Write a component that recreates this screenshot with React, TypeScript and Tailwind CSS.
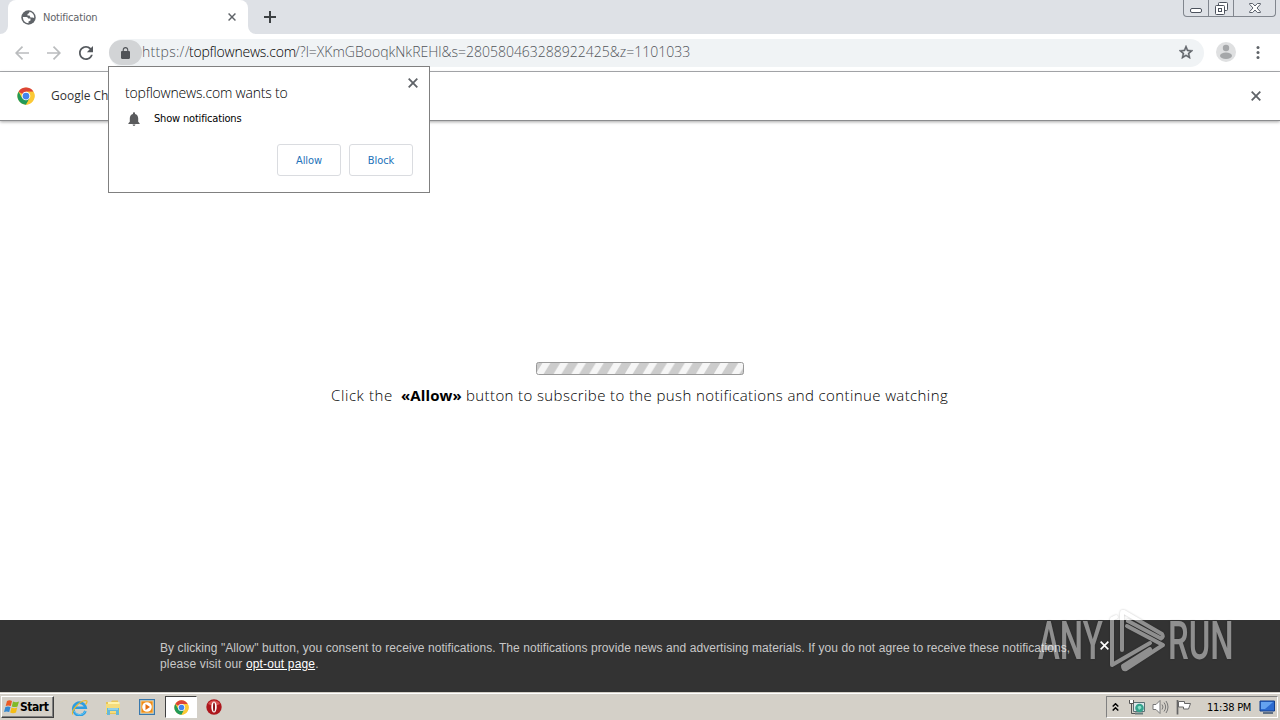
import React from "react";

const tahoma = "font-['DejaVu_Sans_Condensed','DejaVu_Sans',sans-serif] [font-stretch:condensed]";

function Cross({ className = "" }: { className?: string }) {
  return (
    <svg className={className} viewBox="0 0 10 10" fill="none" stroke="currentColor" strokeWidth="1.8">
      <path d="M0.7 0.7 9.3 9.3M9.3 0.7 0.7 9.3" />
    </svg>
  );
}

function ChromeLogo({ className = "" }: { className?: string }) {
  return (
    <svg className={className} viewBox="0 0 48 48">
      <circle cx="24" cy="24" r="23" fill="#fbc936" />
      <path d="M24 24 4.1 12.5A23 23 0 0 1 43.9 12.5H24z" fill="#dc4437" />
      <path d="M4.1 12.5A23 23 0 0 0 24 47L34 29.7 24 24 14 29.7z" fill="#229a58" />
      <path d="M24 12.5H43.9A23 23 0 0 1 24 47L34 29.7z" fill="#fbc936" />
      <circle cx="24" cy="24" r="11.5" fill="#fff" />
      <circle cx="24" cy="24" r="9" fill="#4285ed" />
    </svg>
  );
}

function TabStrip() {
  return (
    <div className="flex h-[34px] shrink-0 items-end bg-[#dee1e6]">
      <svg className="h-2 w-2 shrink-0" viewBox="0 0 8 8"><path d="M8 0V8H0A8 8 0 0 0 8 0z" fill="#fff" /></svg>
      <div className="flex h-[34px] w-60 shrink-0 items-center rounded-t-lg bg-white pl-[13px] pr-[11px] text-[#5f6368]">
        <svg className="h-[15px] w-[15px]" viewBox="0 0 15 15">
          <circle cx="7.500" cy="7.500" r="7.200" fill="#5f6368" />
          <path d="M1.800 7H5.500Q7 7 7.200 8.500H9.500V10.500L7.500 11.500V13.200Q2.300 13 1.800 7z" fill="#fff" />
          <path d="M8.300 1.800V3L6.500 4V5.500H8.500L9.500 7.500H11.500L13.200 8Q13.500 3 8.300 1.800z" fill="#fff" />
        </svg>
        <span className={`${tahoma} ml-[7px] pt-0.5 text-[11px] tracking-[-0.2px]`}>Notification</span>
        <Cross className="ml-auto mr-px h-2 w-2" />
      </div>
      <svg className="h-2 w-2 shrink-0" viewBox="0 0 8 8"><path d="M0 0V8H8A8 8 0 0 1 0 0z" fill="#fff" /></svg>
      <svg className="mb-[11px] ml-2 h-3 w-3" viewBox="0 0 12 12" stroke="#3c4043" strokeWidth="2"><path d="M6 0V12M0 6H12" /></svg>
      <div className="mb-[17px] ml-auto mr-1 flex h-[17px] w-[93px] rounded-b-[4px] border border-t-0 border-[#81868e]">
        <div className="flex w-[25px] justify-center border-r border-[#81868e] pt-2">
          <div className="h-[5px] w-3 rounded-[2px] border border-[#4c525d] bg-white" />
        </div>
        <div className="flex w-[25px] justify-center border-r border-[#81868e] pt-0.5">
          <svg className="h-[13px] w-[13px]" viewBox="0 0 13 13" fill="#fff" stroke="#4c525d">
            <rect x="3.500" y="0.500" width="9" height="8" rx="1" />
            <rect x="0.500" y="3.500" width="9" height="9" rx="1" />
            <rect x="3.500" y="6.500" width="3" height="3" />
          </svg>
        </div>
        <div className="flex flex-1 justify-center pt-[3px]">
          <svg className="h-[10px] w-3" viewBox="0 0 12 10" fill="#fff" stroke="#4c525d" strokeWidth="0.9">
            <path d="M.6.500H3.600L6 3 8.400.500H11.400V1.300L8 5 11.400 8.700V9.500H8.400L6 7 3.600 9.500H.6V8.700L4 5 .6 1.300z" />
          </svg>
        </div>
      </div>
    </div>
  );
}

function Toolbar() {
  return (
    <div className="flex h-[38px] shrink-0 items-center border-b border-[#acaeb1] bg-white pl-[15px] pr-5">
      <svg className="h-[14px] w-[14px]" viewBox="0 0 14 14" fill="none" stroke="#babcbe" strokeWidth="1.700"><path d="M14 7H1.300M7.500.700 1.200 7 7.500 13.300" /></svg>
      <svg className="ml-[18px] h-[14px] w-[14px]" viewBox="0 0 14 14" fill="none" stroke="#babcbe" strokeWidth="1.700"><path d="M0 7H12.700M6.500.700 12.800 7 6.500 13.300" /></svg>
      <svg className="ml-[18px] h-[14px] w-[14px]" viewBox="4 4 16 16" fill="#55595e"><path d="M17.650 6.350C16.200 4.900 14.210 4 12 4c-4.420 0-7.990 3.580-7.990 8s3.570 8 7.990 8c3.730 0 6.840-2.550 7.730-6h-2.080c-.820 2.330-3.040 4-5.650 4-3.310 0-6-2.690-6-6s2.690-6 6-6c1.660 0 3.140.690 4.220 1.780L13 11h7V4l-2.350 2.350z" /></svg>
      <div className="ml-4 flex h-7 w-[1095px] items-center rounded-full bg-[#f0f3f5] pr-[11px]">
        <div className="flex h-[25px] w-[33px] shrink-0 items-center justify-center rounded-full bg-[#d2d4d6]">
          <svg className="h-3 w-[9px]" viewBox="4 1 16 21" fill="#505357"><path d="M18 8h-1V6c0-2.760-2.240-5-5-5S7 3.240 7 6v2H6c-1.100 0-2 .900-2 2v10c0 1.100.900 2 2 2h12c1.100 0 2-.900 2-2V10c0-1.100-.900-2-2-2zM9 6c0-1.660 1.340-3 3-3s3 1.340 3 3v2H9V6z" /></svg>
        </div>
        <span className="-mt-0.5 flex whitespace-nowrap font-['Open_Sans','Noto_Sans',sans-serif] text-[14px] font-light leading-7 text-[#505459]">
          <span className="w-[47px] tracking-[0.3px]">https://</span>
          <span className="w-[107px] tracking-[-0.22px] text-black">topflownews.com</span>
          <span className="-ml-px tracking-[0px]">/?l=XKmGBooqkNkREHl&amp;s=280580463288922425&amp;z=1101033</span>
        </span>
        <svg className="mb-0.5 ml-auto h-[14px] w-[14px]" viewBox="2 2 20 19" fill="#5f6368"><path d="M22 9.240l-7.190-.620L12 2 9.190 8.630 2 9.240l5.460 4.730L5.820 21 12 17.270 18.180 21l-1.630-7.030L22 9.240zM12 15.400l-3.760 2.270 1-4.280-3.320-2.880 4.380-.380L12 6.100l1.710 4.040 4.380.380-3.320 2.880 1 4.280L12 15.400z" stroke="#5f6368" strokeWidth=".7" /></svg>
      </div>
      <svg className="mb-0.5 ml-3 h-5 w-5" viewBox="0 0 20 20"><circle cx="10" cy="10" r="10" fill="#dfe0e1" /><circle cx="10" cy="6" r="3.200" fill="#a5a7a9" /><ellipse cx="10" cy="13.700" rx="6" ry="3.200" fill="#a5a7a9" /></svg>
      <svg className="ml-auto h-[13px] w-[4px]" viewBox="0 0 4 13" fill="#5f6368"><circle cx="2" cy="1.500" r="1.500" /><circle cx="2" cy="6.500" r="1.500" /><circle cx="2" cy="11.500" r="1.500" /></svg>
    </div>
  );
}

function InfoBar() {
  return (
    <div className="flex h-[49px] shrink-0 items-center border-b border-[#8b8c8e] bg-white pl-[17px] pr-[19px] shadow-[0_1px_3px_rgba(0,0,0,0.35)]">
      <ChromeLogo className="h-[18px] w-[18px]" />
      <span className="ml-4 w-[57px] overflow-hidden whitespace-nowrap font-['Open_Sans',sans-serif] text-[12px] text-[#333]">Google Ch</span>
      <Cross className="ml-auto h-[10px] w-[10px] text-[#5f6368]" />
    </div>
  );
}

function PermissionPopup() {
  const button = `${tahoma} flex h-8 w-16 items-center justify-center rounded-[3px] border border-[#dadce0] pt-0.5 text-[11px] tracking-[-0.1px] text-[#2272b9]`;
  return (
    <div className="absolute left-[108px] top-[66px] flex h-[127px] w-[322px] flex-col border border-[#808080] bg-white px-4 text-black">
      <div className="-mr-[5px] flex h-[38px] items-end justify-between">
        <span className="whitespace-nowrap font-['Open_Sans','Noto_Sans',sans-serif] text-[14px] font-[350] leading-[25px] tracking-[-0.2px] text-black">topflownews.com wants to</span>
        <Cross className="mb-[17px] h-[10px] w-[10px] text-[#5f6368]" />
      </div>
      <div className="flex h-7 items-center pl-[3px]">
        <svg className="h-[14px] w-3" viewBox="4 2 16 20" fill="#5a5b5d"><path d="M12 22c1.100 0 2-.900 2-2h-4c0 1.100.890 2 2 2zm6-6v-5c0-3.070-1.640-5.640-4.500-6.320V4c0-.830-.670-1.500-1.500-1.500s-1.500.670-1.500 1.500v.680C7.630 5.360 6 7.920 6 11v5l-2 2v1h16v-1l-2-2z" /></svg>
        <span className={`${tahoma} ml-[14px] whitespace-nowrap pt-px text-[11px] tracking-[-0.18px]`}>Show notifications</span>
      </div>
      <div className="mt-[11px] flex justify-end gap-2">
        <button className={button}>Allow</button>
        <button className={button}>Block</button>
      </div>
    </div>
  );
}

function Watermark() {
  const word = "origin-top-left scale-x-[0.62] absolute top-0 font-['Roboto',sans-serif] text-[53px] font-medium leading-[62px]";
  return (
    <div className="pointer-events-none absolute left-[1038px] top-[610px] h-[62px] w-[196px] text-white opacity-45 drop-shadow-[0_0_1px_rgba(0,0,0,0.5)]">
      <span className={`${word} left-0`}>ANY</span>
      <svg className="absolute left-[72px] top-0 h-[62px] w-[56px]" viewBox="0 0 56 62" fill="none" stroke="currentColor" strokeWidth="4" strokeLinejoin="round" strokeLinecap="round">
        <path d="M6 7 2 9V55L40 33" />
        <path d="M12 40V3Q12 1 14 2L52 24Q54 27 51 28.500L18 11" />
        <path d="M17 16 53 35 16 59Q13 60 13 56L40 39" />
      </svg>
      <span className={`${word} left-[130px]`}>RUN</span>
    </div>
  );
}

function ConsentBar() {
  return (
    <div className="flex h-[72px] shrink-0 items-start bg-[#333] pl-40 pr-[171px] pt-5 font-['Liberation_Sans',Arial,sans-serif] text-[12px] leading-4 text-[#c8c8c8]">
      <div className="whitespace-nowrap">
        <div className="tracking-[0.077px]">By clicking "Allow" button, you consent to receive notifications. The notifications provide news and advertising materials. If you do not agree to receive these notifications,</div>
        <div className="tracking-[0.15px]">please visit our <a className="text-white underline">opt-out page</a>.</div>
      </div>
      <Cross className="ml-auto mt-[1px] h-[9px] w-[9px] text-white" />
    </div>
  );
}

function Taskbar() {
  return (
    <div className="flex h-7 shrink-0 items-center border-t border-[#d4d0c8] bg-[#d4d0c8] pt-px shadow-[inset_0_1px_0_#fff]">
      <div className="ml-px flex h-[22px] w-[53px] items-center border border-b-[#404040] border-l-white border-r-[#404040] border-t-white shadow-[inset_-1px_-1px_0_#808080]">
        <svg className="ml-0.5 h-4 w-4 shrink-0" viewBox="0 0 16 16">
          <path d="M3 2Q5.500.500 8 2L6.800 7Q4 5.800 1.700 7z" fill="#eb5a24" />
          <path d="M9 2.400Q12 4 15 2.400L13.500 7.400Q11 8.800 7.800 7.400z" fill="#80ba27" />
          <path d="M1.400 8Q4 6.800 6.500 8L5.200 13Q2.500 11.800 0 13z" fill="#3488d1" />
          <path d="M7.500 8.500Q10.500 10 13.200 8.500L12 13.500Q9 15 6.200 13.500z" fill="#f5bd16" />
        </svg>
        <span className={`${tahoma} text-[12px] font-bold tracking-[-0.45px] text-black`}>Start</span>
      </div>
      <svg className="ml-[17px] h-[17px] w-[17px]" viewBox="0 0 17 17" fill="none">
        <path d="M14.500 12A6.300 6.300 0 1 1 14.700 8.800H4" stroke="#2d9de1" strokeWidth="2.600" />
        <path d="M14.500 12A6.300 6.300 0 0 1 3 12" stroke="#66c7f4" strokeWidth="1" />
        <path d="M2 15.500C-1 13 8 2 14.500 1.500 17 1.500 16 4 14.500 5.500" stroke="#e9b82b" strokeWidth="1.200" />
      </svg>
      <svg className="ml-[17px] h-[17px] w-4" viewBox="0 0 16 17">
        <path d="M1 3H6L7 1.500H13V15H1z" fill="#e7c456" /><path d="M3 3H14.500V13H3z" fill="#fff3a9" /><path d="M1 5H15V14H1z" fill="#f5dc7b" />
        <path d="M2 9H14V16H11V12H5V16H2z" fill="#66b8d9" /><path d="M3 10H13" stroke="#bde9f5" />
      </svg>
      <svg className="ml-[18px] h-4 w-4" viewBox="0 0 16 16"><rect x=".5" y=".5" width="15" height="15" fill="#79b9e8" stroke="#3878ad" /><rect x="2" y="2" width="12" height="12" fill="#ef8c17" stroke="#f9c87e" /><circle cx="8" cy="8" r="4.800" fill="#fff" /><path d="M6.500 5 11 8 6.500 11z" fill="#e46d10" /></svg>
      <div className="ml-[10px] flex h-[22px] w-8 items-center justify-center border border-b-white border-l-[#404040] border-r-white border-t-[#404040] bg-white">
        <ChromeLogo className="h-[15px] w-[15px]" />
      </div>
      <svg className="ml-[9px] h-4 w-4" viewBox="0 0 16 16"><circle cx="8" cy="8" r="7.700" fill="#ad171d" /><path d="M2 5A7 7 0 0 1 14 5Q8 8 2 5" fill="#d95050" /><ellipse cx="8" cy="8" rx="2.700" ry="5.600" fill="#fff" /><ellipse cx="8" cy="8" rx="1" ry="4.600" fill="#8c1218" /></svg>
      <div className="ml-auto mr-0.5 flex h-[22px] w-[172px] items-center border border-b-white border-l-[#808080] border-r-white border-t-[#808080] pl-[5px]">
        <svg className="h-2 w-[7px]" viewBox="0 0 7 8" fill="none" stroke="#000" strokeWidth="1.500"><path d="M.7 3.500 3.500.800 6.300 3.500M.7 7.500 3.500 4.800 6.300 7.500" /></svg>
        <svg className="ml-[9px] h-4 w-[17px]" viewBox="0 0 17 16"><path d="M5.500 3.500H16.500V12.500H5.500z" fill="#dce8eb" stroke="#5b7075" /><path d="M7 14.500H15" stroke="#687c7e" strokeWidth="2" /><circle cx="11.500" cy="9" r="4.300" fill="#35a28d" /><path d="M9.500 8Q13 5 13.500 9L11 11z" fill="#8be0cb" /><path d="M1.500 1V4.500H5.500V1" fill="#fff" stroke="#555" /><path d="M3.500 4.500V14.500H7" fill="none" stroke="#555" /></svg>
        <svg className="ml-[7px] h-4 w-[17px]" viewBox="0 0 17 16" fill="none" stroke="#777"><path d="M1 5.500H4L8 1.500V14.500L4 10.500H1z" fill="#fff" /><path d="M10 5.500Q12 8 10 10.500M12 3.500Q15.300 8 12 12.500M14 2Q18 8 14 14" /></svg>
        <svg className="ml-[7px] h-4 w-4" viewBox="0 0 16 16" stroke="#666"><path d="M1.500 1V15.500" strokeWidth="1.700" /><path d="M2.500 2.500H8.500V4.500H14.500L12.500 10H7.500V8H2.500z" fill="#fff" /></svg>
        <span className={`${tahoma} ml-[15px] whitespace-nowrap pt-0.5 text-[11px] tracking-[-0.25px] text-black`}>11:38 PM</span>
        <svg className="ml-auto mr-px h-[14px] w-[17px]" viewBox="0 0 17 14"><path d="M1 1H15.500V11H1z" fill="#2c6bd0" stroke="#133e8a" /><path d="M2 2H14L6 9H2z" fill="#64a2ef" /><path d="M4 13H14" stroke="#38516f" strokeWidth="1.500" /></svg>
      </div>
    </div>
  );
}

export default function App() {
  return (
    <div className="relative flex h-[720px] w-[1280px] flex-col overflow-hidden bg-white">
      <TabStrip />
      <Toolbar />
      <InfoBar />
      <main className="flex flex-1 flex-col items-center pt-[241px]">
        <svg className="h-[13px] w-[208px]" viewBox="0 0 208 13">
          <defs>
            <pattern id="stripes" width="17.800" height="13" patternUnits="userSpaceOnUse"><rect width="17.800" height="13" fill="#ccc" /><path d="M-1 13 7 0H15L7 13z" fill="#f6f6f6" /></pattern>
          </defs>
          <rect x=".5" y=".5" width="207" height="12" rx="2" fill="url(#stripes)" stroke="#999" />
        </svg>
        <p className="mt-[9px] flex w-[618px] whitespace-pre font-['Open_Sans',sans-serif] text-[15px] font-[350] leading-[22px] text-black">
          <span className="w-[70px] shrink-0 tracking-[0.6px]">Click the </span>
          <b className="w-[65px] shrink-0 font-bold tracking-[0.1px]">«Allow» </b>
          <span className="shrink-0 tracking-[0.39px]">button to subscribe to the push notifications and continue watching</span>
        </p>
      </main>
      <ConsentBar />
      <Taskbar />
      <PermissionPopup />
      <Watermark />
    </div>
  );
}
